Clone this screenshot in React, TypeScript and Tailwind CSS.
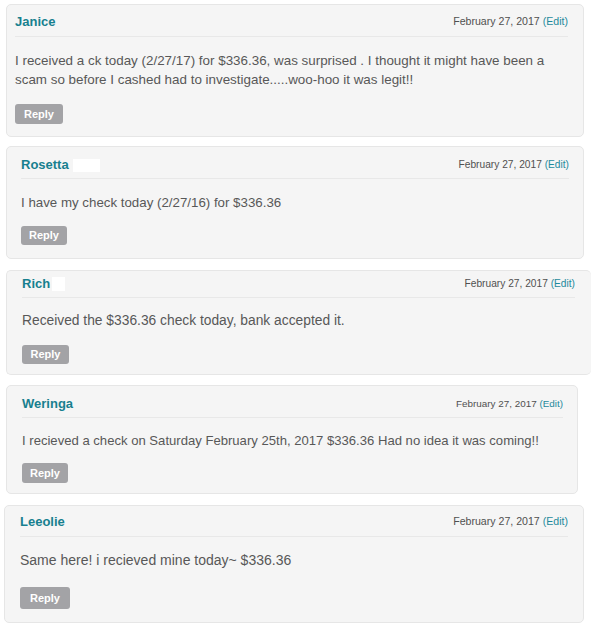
import React from 'react';

type Comment = {
  name: string;
  mask?: string;
  body: string[];
  card: string;
  head: string;
  date: string;
  text: string;
  btn: string;
};

const comments: Comment[] = [
  {
    name: 'Janice',
    body: [
      'I received a ck today (2/27/17) for $336.36, was surprised . I thought it might have been a',
      'scam so before I cashed had to investigate.....woo-hoo it was legit!!',
    ],
    card: 'mt-[4px] ml-[6px] w-[578px] h-[133px] pl-[8px] pr-[15px] border-r',
    head: 'h-[32px] pt-[3px]',
    date: 'text-[10.6px]',
    text: 'mt-[14px] text-[13.4px]',
    btn: 'mt-[15px] w-[48px] h-[20px]',
  },
  {
    name: 'Rosetta',
    mask: 'w-[27px] h-[13px] ml-[4px]',
    body: ['I have my check today (2/27/16) for $336.36'],
    card: 'mt-[9px] ml-[6px] w-[578px] h-[113px] pl-[14px] pr-[14px] border-r',
    head: 'h-[32px] pt-[5px]',
    date: 'text-[10.2px]',
    text: 'mt-[14px] text-[13.3px]',
    btn: 'mt-[14px] w-[46px] h-[19px]',
  },
  {
    name: 'Rich',
    mask: 'w-[13px] h-[14px] ml-[2px]',
    body: ['Received the $336.36 check today, bank accepted it.'],
    card: 'mt-[11px] ml-[6px] w-[585px] h-[105px] pl-[15px] pr-[16px] border-r-0',
    head: 'h-[27px] pt-0',
    date: 'text-[10.2px]',
    text: 'mt-[13px] text-[13.8px]',
    btn: 'mt-[15px] w-[47px] h-[19px]',
  },
  {
    name: 'Weringa',
    body: ['I recieved a check on Saturday February 25th, 2017 $336.36 Had no idea it was coming!!'],
    card: 'mt-[10px] ml-[6px] w-[572px] h-[109px] pl-[15px] pr-[14px] border-r',
    head: 'h-[32px] pt-[5px]',
    date: 'text-[9.9px]',
    text: 'mt-[13px] text-[13.1px]',
    btn: 'mt-[13px] w-[46px] h-[20px]',
  },
  {
    name: 'Leeolie',
    body: ['Same here! i recieved mine today~ $336.36'],
    card: 'mt-[11px] ml-[4px] w-[580px] h-[118px] pl-[15px] pr-[15px] border-r',
    head: 'h-[31px] pt-[2px]',
    date: 'text-[10.6px]',
    text: 'mt-[14px] text-[14px]',
    btn: 'mt-[17px] w-[50px] h-[22px]',
  },
];

const CommentCard = ({ c }: { c: Comment }) => (
  <div className={`${c.card} shrink-0 bg-[#f5f5f5] border-t border-b border-l border-[#e6e6e6] rounded-[5px]`}>
    <div className={`${c.head} flex items-center justify-between border-b border-[#e8e8e8]`}>
      <div className="flex items-center">
        <span className="text-[13px] font-bold text-[#17808f]">{c.name}</span>
        {c.mask && <span className={`${c.mask} inline-block bg-white`}></span>}
      </div>
      <span className={`${c.date} text-[#505050]`}>
        February 27, 2017 <span className="text-[#1f8a9c]">(Edit)</span>
      </span>
    </div>
    <div className={`${c.text} leading-[19px] text-[#585858] whitespace-nowrap`}>
      {c.body.map((line) => (
        <div key={line}>{line}</div>
      ))}
    </div>
    <button className={`${c.btn} flex items-center justify-center rounded-[3px] bg-[#a3a3a6] text-[11px] font-bold text-white`}>
      Reply
    </button>
  </div>
);

export default function App() {
  return (
    <div className="w-[591px] h-[633px] bg-white flex flex-col overflow-hidden [font-family:'Liberation_Sans',Arial,sans-serif]">
      {comments.map((c) => (
        <CommentCard key={c.name} c={c} />
      ))}
    </div>
  );
}
